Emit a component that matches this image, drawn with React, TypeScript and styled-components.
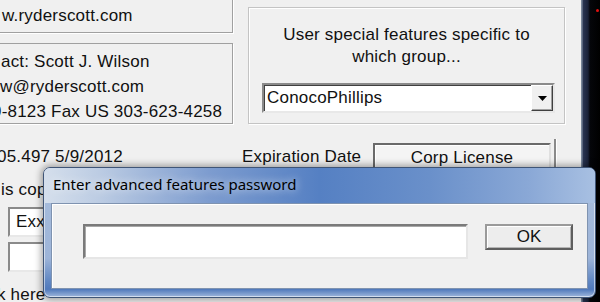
import styled, { createGlobalStyle } from "styled-components"

const GlobalStyle = createGlobalStyle`
  html, body {
    margin: 0;
    padding: 0;
    width: 600px;
    height: 302px;
    overflow: hidden;
    background: #f0f0f0;
  }
`;

const Screen = styled.div`
  position: relative;
  display: flex;
  width: 600px;
  height: 302px;
  overflow: hidden;
  font-family: "Liberation Sans", Arial, sans-serif;
  font-size: 17px;
  letter-spacing: 0.2px;
  color: #111;
`;

const MainWindow = styled.div`
  display: flex;
  flex-direction: column;
  width: 581px;
  height: 302px;
  background: #f0f0f0;
  overflow: hidden;
`;

/* bord de l'ecran derriere la fenetre */
const DarkEdge = styled.div`
  position: relative;
  flex: 1;
  background: linear-gradient(to right, #6b7a8e 0px, #8894a6 1px, #2a3552 2px, #1a2238 7px, #05060a 9px, #000 100%);

  &::after {
    content: "";
    position: absolute;
    right: 1px;
    top: 9px;
    width: 3px;
    height: 3px;
    border-radius: 50%;
    background: #e01010;
  }
`;

const TopArea = styled.div`
  display: flex;
  align-items: flex-start;
  flex-shrink: 0;
  height: 124px;
`;

const LeftColumn = styled.div`
  display: flex;
  flex-direction: column;
  width: 243px;
  margin-left: -10px;
`;

const Panel = styled.div<{ $top: number; $h: number; $padTop: number }>`
  box-sizing: border-box;
  margin-top: ${(p) => p.$top}px;
  height: ${(p) => p.$h}px;
  padding-top: ${(p) => p.$padTop}px;
  padding-left: 10px;
  border: 1px solid #a0a0a0;
  box-shadow: 1px 1px 0 #ffffff;
  white-space: nowrap;
  overflow: hidden;
`;

const Line = styled.div<{ $shift?: number }>`
  height: 25px;
  line-height: 25px;
  margin-left: ${(p) => p.$shift ?? 0}px;
`;

const GroupBox = styled.div`
  box-sizing: border-box;
  margin-left: 15px;
  margin-top: 7px;
  width: 317px;
  height: 117px;
  border: 1px solid #c4c4c4;
  box-shadow: inset 1px 1px 0 #ffffff, 1px 1px 0 #ffffff;
  padding-top: 16px;
  text-align: center;
`;

const GroupText = styled.div`
  line-height: 22px;
`;

const Combo = styled.div`
  box-sizing: border-box;
  display: flex;
  align-items: center;
  width: 293px;
  height: 30px;
  margin: 15px 0 0 13px;
  background: #fff;
  border: 2px solid;
  border-color: #8a8a8a #e8e8e8 #e8e8e8 #8a8a8a;
  box-shadow: inset 1px 1px 0 #404040;
  text-align: left;
`;

const ComboText = styled.span`
  flex: 1;
  padding-left: 3px;
`;

const DropButton = styled.div`
  box-sizing: border-box;
  display: flex;
  align-items: center;
  justify-content: center;
  width: 22px;
  height: 26px;
  background: #f0f0f0;
  border: 1px solid;
  border-color: #ffffff #404040 #404040 #ffffff;
  box-shadow: inset -1px -1px 0 #a0a0a0;
`;

const Row = styled.div<{ $top: number; $h: number }>`
  display: flex;
  align-items: center;
  flex-shrink: 0;
  margin-top: ${(p) => p.$top}px;
  height: ${(p) => p.$h}px;
  white-space: nowrap;
`;

const Cell = styled.div<{ $w: number; $shift?: number }>`
  width: ${(p) => p.$w}px;
  margin-left: ${(p) => p.$shift ?? 0}px;
  flex-shrink: 0;
`;

const LicenseBox = styled.div`
  box-sizing: border-box;
  width: 178px;
  height: 28px;
  align-self: flex-start;
  padding-top: 2px;
  text-align: center;
  line-height: 22px;
  background: #f4f4f4;
  border: 2px solid;
  border-color: #6a6a6a #e0e0e0 #e0e0e0 #6a6a6a;
  box-shadow: inset 1px 1px 0 #ffffff;
`;

const Divider = styled.div`
  width: 2px;
  height: 32px;
  margin-left: 3px;
  align-self: flex-start;
  margin-top: -4px;
  background: #8a8a8a;
  box-shadow: 1px 0 0 #ffffff;
`;

const TextField = styled.div<{ $top: number }>`
  box-sizing: border-box;
  width: 200px;
  height: 30px;
  margin: ${(p) => p.$top}px 0 0 8px;
  padding-left: 6px;
  line-height: 26px;
  background: #fff;
  border: 2px solid;
  border-color: #8a8a8a #e8e8e8 #e8e8e8 #8a8a8a;
  white-space: nowrap;
  flex-shrink: 0;
`;

const Dialog = styled.div`
  position: absolute;
  left: 43px;
  top: 167px;
  box-sizing: border-box;
  width: 553px;
  height: 131px;
  display: flex;
  flex-direction: column;
  border: 1px solid #3f5577;
  border-radius: 7px;
  background: linear-gradient(to bottom, #a9bedc 0%, #9db4d8 70%, #5f86c2 88%, #5079bb 94%, #9fb7dc 100%);
  box-shadow: 0 0 7px 2px rgba(0, 0, 0, 0.35), inset 0 0 0 1px rgba(255, 255, 255, 0.55);
  overflow: hidden;
  font-family: "Noto Sans", "Open Sans", sans-serif;
  letter-spacing: 0;
`;

const TitleBar = styled.div`
  height: 35px;
  padding-left: 9px;
  line-height: 32px;
  font-size: 15px;
  color: #000;
  background: linear-gradient(to right, #d5dfec 0%, #bccce3 10%, #7d9ccf 30%, #5580c3 50%, #6a90ca 70%, #8aa8d6 88%, #a8c0e2 100%);
  text-shadow: 0 0 8px rgba(255, 255, 255, 0.9);
`;

const ClientArea = styled.div`
  box-sizing: border-box;
  display: flex;
  align-items: flex-start;
  height: 86px;
  margin: 0 7px;
  background: #f0f0f0;
  border: 1px solid #7f93b0;
  box-shadow: inset 1px 1px 0 #ffffff;
`;

const PasswordInput = styled.div`
  box-sizing: border-box;
  width: 385px;
  height: 35px;
  margin: 20px 0 0 31px;
  background: #fff;
  border: 2px solid;
  border-color: #7a7a7a #e6e6e6 #e6e6e6 #7a7a7a;
  box-shadow: inset 1px 1px 0 #a8a8a8;
`;

const OkButton = styled.div`
  box-sizing: border-box;
  display: flex;
  align-items: center;
  justify-content: center;
  width: 88px;
  height: 26px;
  margin: 20px 0 0 17px;
  background: #ededed;
  border: 2px solid;
  border-color: #9a9a9a #5e5e5e #5e5e5e #9a9a9a;
  box-shadow: inset 1px 1px 0 #ffffff, inset -1px -1px 0 #b4b4b4;
  font-family: "Liberation Sans", Arial, sans-serif;
  font-size: 17px;
  color: #111;
`;

function DownArrow() {
  return (
    <svg width="9" height="5" viewBox="0 0 9 5">
      <path d="M0 0 H9 L4.5 5 Z" fill="#000" />
    </svg>
  );
}

export default function App() {
  return (
    <>
      <GlobalStyle />
      <Screen>
        <MainWindow>
          <TopArea>
            <LeftColumn>
              <Panel $top={-8} $h={41} $padTop={10}>
                <Line $shift={1}>w.ryderscott.com</Line>
              </Panel>
              <Panel $top={10} $h={81} $padTop={5}>
                <Line $shift={0}>act: Scott J. Wilson</Line>
                <Line $shift={-1}>w@ryderscott.com</Line>
                <Line $shift={-9}>9-8123 Fax US 303-623-4258</Line>
              </Panel>
            </LeftColumn>
            <GroupBox>
              <GroupText>User special features specific to</GroupText>
              <GroupText>which group...</GroupText>
              <Combo>
                <ComboText>ConocoPhillips</ComboText>
                <DropButton>
                  <DownArrow />
                </DropButton>
              </Combo>
            </GroupBox>
          </TopArea>
          <Row $top={19} $h={28}>
            <Cell $w={245} $shift={-3}>05.497 5/9/2012</Cell>
            <Cell $w={131}>Expiration Date</Cell>
            <LicenseBox>Corp License</LicenseBox>
            <Divider />
          </Row>
          <Row $top={8} $h={22}>
            <Cell $w={200} $shift={1}>is copy</Cell>
          </Row>
          <TextField $top={6}>ExxonMobil</TextField>
          <TextField $top={5} />
          <Row $top={12} $h={22}>
            <Cell $w={200} $shift={-3}>k here</Cell>
          </Row>
        </MainWindow>
        <DarkEdge />
        <Dialog>
          <TitleBar>Enter advanced features password</TitleBar>
          <ClientArea>
            <PasswordInput />
            <OkButton>OK</OkButton>
          </ClientArea>
        </Dialog>
      </Screen>
    </>
  );
}
